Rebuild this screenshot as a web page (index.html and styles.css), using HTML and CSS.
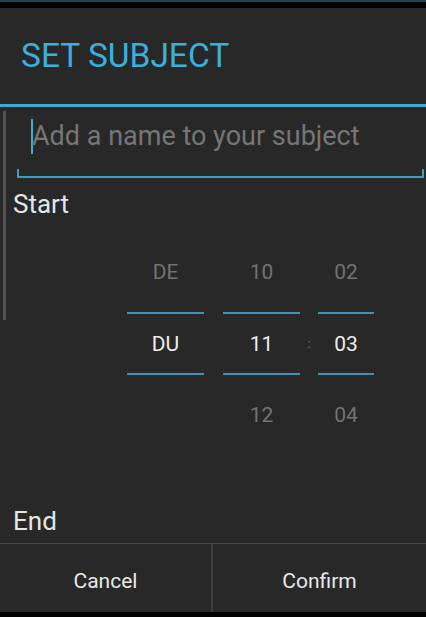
FILE: index.html
```html
<!DOCTYPE html>
<html>
<head>
<meta charset="utf-8">
<link rel="stylesheet" href="styles.css">
</head>
<body>
<div class="status-edge"></div>
<div class="dialog">
  <div class="header"><h1 class="title">SET SUBJECT</h1></div>
  <div class="header-rule"></div>
  <div class="content">
    <div class="scrollbar"></div>
    <div class="input">
      <span class="cursor"></span><span class="placeholder">Add a name to your subject</span>
    </div>
    <div class="label label-start">Start</div>
    <div class="picker">
      <div class="col col-wide">
        <div class="cell cell-top dim">DE</div>
        <div class="cell cell-mid">DU</div>
        <div class="cell cell-bottom dim"></div>
      </div>
      <div class="col col-wide">
        <div class="cell cell-top dim">10</div>
        <div class="cell cell-mid">11</div>
        <div class="cell cell-bottom dim">12</div>
      </div>
      <div class="colon">:</div>
      <div class="col col-narrow">
        <div class="cell cell-top dim">02</div>
        <div class="cell cell-mid">03</div>
        <div class="cell cell-bottom dim">04</div>
      </div>
    </div>
    <div class="label label-end">End</div>
  </div>
  <div class="buttons">
    <div class="btn btn-left">Cancel</div>
    <div class="btn">Confirm</div>
  </div>
</div>
<div class="bottom-edge"></div>
</body>
</html>
```

FILE: styles.css
```css
html, body {
  margin: 0;
  padding: 0;
  background: #000;
  font-family: Roboto, "Noto Sans", sans-serif;
}
body {
  width: 426px;
  height: 617px;
  overflow: hidden;
}
.status-edge {
  height: 2px;
  background: #1d4654;
  border-bottom: 6px solid #000;
}
.dialog {
  background: #282828;
  height: 604px;
  display: flex;
  flex-direction: column;
}
.header {
  height: 96px;
  display: flex;
  align-items: center;
  padding-left: 21px;
}
.title {
  margin: 0;
  font-weight: 400;
  font-size: 33.5px;
  color: #3ab0dc;
  line-height: 40px;
}
.header-rule {
  height: 3px;
  background: #36acd6;
}
.content {
  position: relative;
  flex: 1;
  overflow: hidden;
}
.scrollbar {
  position: absolute;
  left: 3px;
  top: 4px;
  width: 3px;
  height: 209px;
  background: #515151;
}
.input {
  margin: 11px 2px 0 17px;
  padding: 0 0 22px 12px;
  height: 36px;
  display: flex;
  align-items: center;
  border-bottom: 2px solid #3a9dc2;
  border-left: 2px solid #3a9dc2;
  border-right: 2px solid #3a9dc2;
  border-image: linear-gradient(to bottom, transparent 0, transparent 52px, #3a9dc2 52px) 1;
}
.cursor {
  width: 2px;
  height: 35px;
  background: #3ab0d0;
  margin-right: -1px;
}
.placeholder {
  font-size: 27px;
  line-height: 36px;
  color: #767676;
}
.label {
  font-size: 26px;
  line-height: 32px;
  color: #e6e6e6;
  padding-left: 13px;
}
.label-start {
  margin-top: 10px;
}
.picker {
  margin: 20px 0 0 127px;
  display: flex;
  font-size: 21px;
}
.col {
  display: flex;
  flex-direction: column;
  align-items: stretch;
  text-align: center;
}
.col-wide {
  width: 77px;
  margin-right: 19px;
}
.col-wide + .colon {
  margin-left: -19px;
}
.col-narrow {
  width: 56px;
}
.colon {
  width: 18px;
  text-align: center;
  color: #7a7a7a;
  font-size: 13px;
  padding-top: 96px;
}
.cell {
  display: flex;
  align-items: center;
  justify-content: center;
  color: #ededed;
}
.cell-top {
  height: 64px;
  padding-bottom: 8px;
}
.cell-mid {
  height: 59px;
  border-top: 2px solid #3e93b3;
  border-bottom: 2px solid #3e93b3;
}
.cell-bottom {
  height: 64px;
  padding-top: 8px;
}
.dim {
  color: #727272;
}
.label-end {
  margin-top: 58px;
}
.buttons {
  height: 68px;
  border-top: 1px solid #474747;
  display: flex;
}
.btn {
  flex: 1;
  display: flex;
  align-items: center;
  justify-content: center;
  padding-top: 5px;
  box-sizing: border-box;
  font-size: 21px;
  color: #e8e8e8;
}
.btn-left {
  flex: 0 0 213px;
  border-right: 2px solid #3d3d3d;
}
.bottom-edge {
  height: 5px;
  background: #000;
}
```
